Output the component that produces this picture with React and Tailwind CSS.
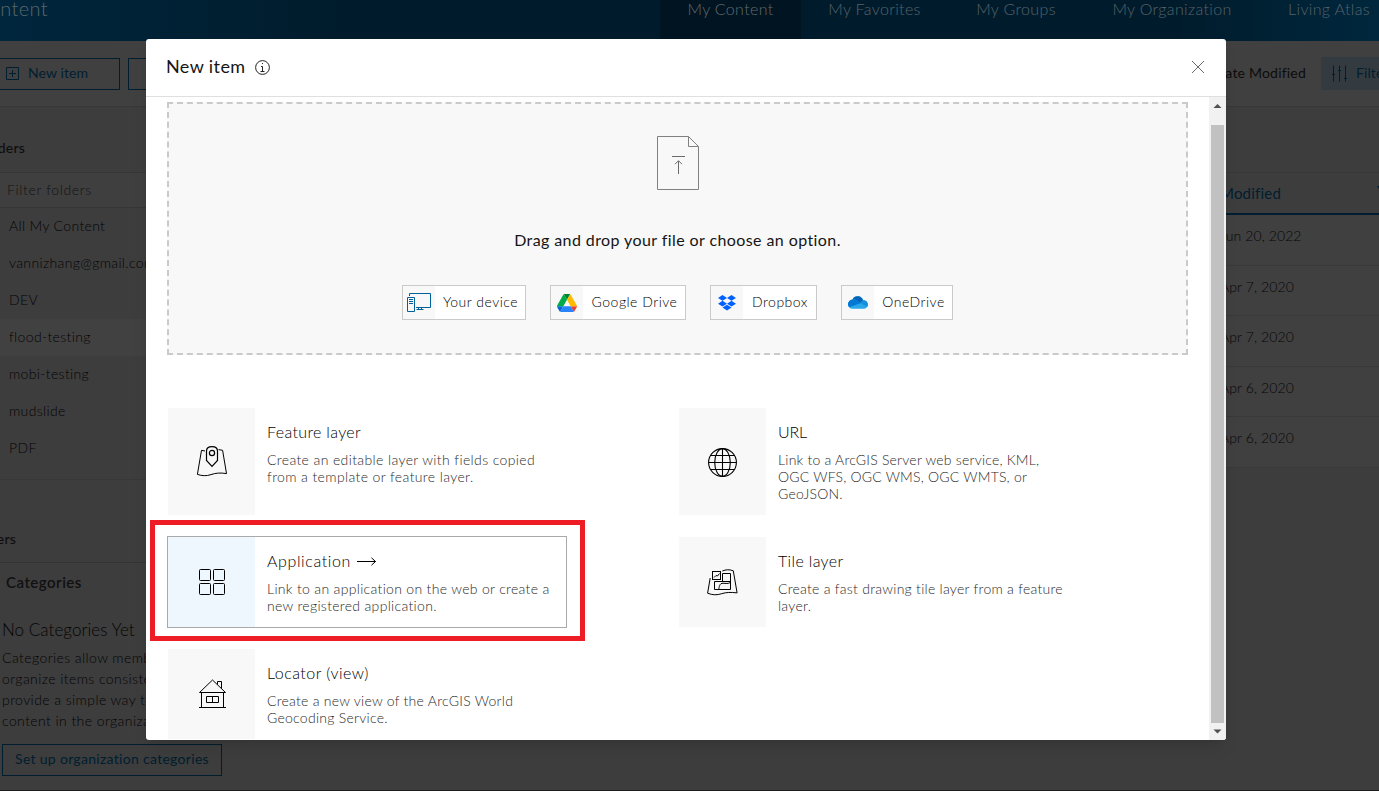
import React from "react";

const svgBase = { fill: "none", stroke: "currentColor", strokeWidth: 1 };

function PinMapIcon() {
  return (
    <svg width="31" height="31" viewBox="0 0 31 31" {...svgBase} className="text-black">
      <path d="M9 5 5.500 4.300 1.400 28.400c4.600 1.500 9 1.800 13.600.200 5-1.700 9.500-2 15.500-1L26.600 4.300 22.500 3.600" />
      <path strokeWidth="1.200" d="M10.500 5c0-3 2-4.400 5.500-4.400s5.500 1.400 5.500 4.400v9.500L16 20.300l-5.500-5.800z" />
      <circle cx="16" cy="7" r="2.600" strokeWidth="1.200" />
    </svg>
  );
}

function GlobeIcon() {
  return (
    <svg width="31" height="31" viewBox="0 0 31 31" fill="none" stroke="#000" strokeWidth="1.100">
      <circle cx="15.500" cy="16.500" r="13.900" />
      <ellipse cx="15.500" cy="16.500" rx="7.800" ry="13.900" />
      <path d="M15.500 2.500v28M1.500 16.500h28M3.500 9.500h24M3.500 23.500h24" />
    </svg>
  );
}

function AppsIcon() {
  return (
    <svg width="31" height="32" viewBox="0 0 31 32" {...svgBase} className="text-black">
      <rect x="3.500" y="3.500" width="11" height="11" rx="1" />
      <rect x="17.500" y="3.500" width="11" height="11" rx="1" />
      <rect x="3.500" y="17.500" width="11" height="11" rx="1" />
      <rect x="17.500" y="17.500" width="11" height="11" rx="1" />
    </svg>
  );
}

function TileMapIcon() {
  return (
    <svg width="31" height="32" viewBox="0 0 31 32" {...svgBase} className="text-black">
      <path d="M3.200 12 .600 27.200c5 2 9.500 2 14 .5 5-1.500 9-1.600 15.500-.8L26.300 4.800c-4-1.500-7.300-1.300-11 .2" />
      <rect x="5.500" y="5.500" width="8" height="8" />
      <path d="M15.500 15.500v-8h8v16h-16v-8h16M11.500 23.500c.8-.5.300-5.500 3.500-6.200 2.500-.3 5.500 1 8.500-.8M7 11.500l2-2 1.500.500 2-2.500" />
    </svg>
  );
}

function HouseIcon() {
  return (
    <svg width="31" height="32" viewBox="0 0 31 32" {...svgBase} className="text-black">
      <path d="M3.500 14.500 16.500 2 29.500 14.500zM5.500 14.500v15M27.500 14.500v15M3 29.500h27M10.500 18.500h12v6h-12zM16.500 18.500v6M21.500 6.500v-3h4v7" />
    </svg>
  );
}

function DeviceIcon() {
  return (
    <svg width="24" height="21" viewBox="0 0 24 21" fill="none" stroke="#00619b" className="shrink-0">
      <path d="M2.500 4V1.500h21v14H9M.5 5.500h7v14h-7zM2 7.500h4M2 9.500h4M2 11.500h4M11.500 15.500v2M14.500 15.500v2M9.500 17.500h7" />
    </svg>
  );
}

function DriveIcon() {
  return (
    <svg width="20" height="18" viewBox="0 0 87.3 78" className="shrink-0">
      <path fill="#0066da" d="m6.600 66.850 3.850 6.650c.8 1.400 1.950 2.500 3.300 3.300l13.750-23.800H0c0 1.550.4 3.100 1.200 4.500z" />
      <path fill="#00ac47" d="M43.650 25 29.900 1.200c-1.350.8-2.500 1.900-3.300 3.300L1.200 48.500A9 9 0 0 0 0 53h27.500z" />
      <path fill="#ea4335" d="M73.550 76.800c1.350-.8 2.500-1.900 3.300-3.300l1.600-2.750L86.100 57.500c.8-1.400 1.200-2.950 1.200-4.500H59.800l5.850 11.500z" />
      <path fill="#00832d" d="M43.650 25 57.400 1.200C56.050.4 54.500 0 52.900 0H34.400c-1.600 0-3.150.45-4.500 1.200z" />
      <path fill="#2684fc" d="M59.800 53H27.500L13.750 76.800c1.350.8 2.900 1.200 4.500 1.200h50.800c1.600 0 3.150-.45 4.500-1.200z" />
      <path fill="#ffba00" d="M73.400 26.500 60.700 4.500c-.8-1.400-1.950-2.500-3.300-3.300L43.650 25 59.800 53h27.450c0-1.550-.4-3.100-1.200-4.500z" />
    </svg>
  );
}

function DropboxIcon() {
  return (
    <svg width="18" height="16" viewBox="0 0 18 16" fill="#0061ff" className="shrink-0">
      <path d="M4.500 0 9 2.900 4.500 5.800 0 2.900zM13.500 0 18 2.900l-4.500 2.900L9 2.900zM4.500 5.800 9 8.700l-4.500 2.900L0 8.700zM13.500 5.800 18 8.700l-4.500 2.900L9 8.700zM9 9.700l4.500 2.900L9 15.500l-4.500-2.900z" />
    </svg>
  );
}

function OneDriveIcon() {
  return (
    <svg width="20" height="13" viewBox="0 0 20 13" className="shrink-0">
      <path fill="#28a8ea" d="M4.500 3.400A5.700 5.700 0 0 1 15 4.300c2.900-.1 4.900 1.900 4.900 4.300 0 2.500-1.900 4.200-4.300 4.200H4.700C2 12.800.1 10.800.1 8.200c0-2.700 1.900-4.700 4.400-4.800z" />
      <path fill="#1490df" d="M11 6.500 15 4.300c2.900-.1 4.900 1.900 4.900 4.300 0 .8-.2 1.500-.6 2.200z" />
      <path fill="#0078d4" d="M4.500 3.400c1.600-.2 2.900.1 4 .8l4.500 2.800L1.100 11.200A4.800 4.800 0 0 1 4.500 3.400z" />
      <path fill="#0364b8" d="M4.500 3.400A5.700 5.700 0 0 1 15 4.300L12 6.400 8.500 4.200c-1.200-.7-2.500-1-4-.8z" />
    </svg>
  );
}

const sources = [
  { label: "Your device", Icon: DeviceIcon, box: "w-[124px]" },
  { label: "Google Drive", Icon: DriveIcon, box: "w-[136px]" },
  { label: "Dropbox", Icon: DropboxIcon, box: "w-[107px]" },
  { label: "OneDrive", Icon: OneDriveIcon, box: "w-[112px]" },
];

const items = [
  { title: "Feature layer", lines: ["Create an editable layer with fields copied", "from a template or feature layer."], Icon: PinMapIcon, box: "h-[109px]", titleTrack: "tracking-[0.35px]", textTrack: "tracking-[0.38px]" },
  { title: "URL", lines: ["Link to a ArcGIS Server web service, KML,", "OGC WFS, OGC WMS, OGC WMTS, or", "GeoJSON."], Icon: GlobeIcon, box: "h-[109px]", titleTrack: "tracking-[-0.2px]", textTrack: "tracking-[0.22px]" },
  { title: "Application", lines: ["Link to an application on the web or create a", "new registered application."], Icon: AppsIcon, box: "h-[92px]", active: true, titleTrack: "tracking-[0.62px]", textTrack: "tracking-[0.32px]" },
  { title: "Tile layer", lines: ["Create a fast drawing tile layer from a feature", "layer."], Icon: TileMapIcon, box: "h-[92px]", titleTrack: "tracking-[0.35px]", textTrack: "tracking-[0.27px]" },
  { title: "Locator (view)", lines: ["Create a new view of the ArcGIS World", "Geocoding Service."], Icon: HouseIcon, box: "h-[92px]", titleTrack: "tracking-[0.48px]", textTrack: "tracking-[0.27px]" },
];

function ItemCard({ title, lines, Icon, box, active, titleTrack, textTrack }) {
  return (
    <div className={`flex w-[400px] border ${box} ${active ? "border-[#a9a9a9]" : "border-transparent"}`}>
      <div className={`flex w-[87px] shrink-0 items-center justify-center ${active ? "bg-[#eef6fe]" : "bg-[#f8f8f8]"}`}>
        <Icon />
      </div>
      <div className="pt-[14px] pl-3 whitespace-nowrap">
        <h3 className={`flex h-5 items-center gap-[6px] text-[16px] font-light text-black ${titleTrack}`}>
          {title}
          {active && (
            <svg width="20" height="9" viewBox="0 0 20 9" {...svgBase}>
              <path d="M0 4.500h18.500M14.500.8l4 3.700-4 3.700" />
            </svg>
          )}
        </h3>
        <p className={`mt-[9px] text-[14px] leading-[17px] font-light text-[#2a2a2a] ${textTrack}`}>
          {lines.map((l) => (
            <span key={l} className="block">{l}</span>
          ))}
        </p>
      </div>
    </div>
  );
}

const nav = [
  { label: "My Content", box: "w-[141px]", active: true },
  { label: "My Favorites", box: "w-[147px]" },
  { label: "My Groups", box: "w-[136px]" },
  { label: "My Organization", box: "w-[176px]" },
  { label: "Living Atlas", box: "w-[138px]" },
];
const folders = ["All My Content", "vannizhang@gmail.com", "DEV", "flood-testing", "mobi-testing", "mudslide", "PDF"];
const dates = ["Jun 20, 2022", "Apr 7, 2020", "Apr 7, 2020", "Apr 6, 2020", "Apr 6, 2020"];

function Backdrop() {
  return (
    <div className="flex h-full flex-col whitespace-nowrap">
      <header className="flex h-[41px] shrink-0 bg-linear-to-r from-[#00263d] via-[#001c2c] via-25% to-[#001c2c] to-80%">
        <div className="flex w-12 shrink-0 justify-end text-[20px] leading-[17px] font-light tracking-[0.4px] text-[#5a656b]">My Content</div>
        <nav className="ml-[612px] flex bg-linear-to-r from-transparent from-70% to-[#00283f]">
          {nav.map((n) => (
            <div key={n.label} className={`flex shrink-0 justify-center text-[16px] leading-[17px] font-light tracking-[0.35px] ${n.box} ${n.active ? "bg-[#001422] text-[#626a6e]" : "text-[#57626a]"}`}>
              {n.label}
            </div>
          ))}
        </nav>
      </header>
      <div className="flex h-[66px] shrink-0 items-center border-b border-[#373737] bg-[#404040]">
        <div className="flex h-8 w-[120px] items-center border border-l-0 border-[#001e30] pl-1.5 text-[14px] text-[#001e30]">
          <svg width="13" height="13" viewBox="0 0 13 13" {...svgBase}>
            <path d="M.5.5h12v12H.5zM6.500 3v7M3 6.500h7" />
          </svg>
          <span className="ml-[9px] pb-[2px] tracking-[0.1px]">New item</span>
        </div>
        <div className="ml-2 h-8 w-24 border border-[#001e30]" />
        <div className="ml-auto w-24 pb-[2px] text-right text-[14px] tracking-[0.2px] text-[#0c0c0c]">Date Modified</div>
        <div className="ml-[15px] flex h-[33px] w-[58px] items-center overflow-hidden bg-[#343b40] pl-[11px] text-[14px] text-[#001e30]">
          <svg width="15" height="17" viewBox="0 0 15 17" {...svgBase} className="shrink-0">
            <path d="M1.500.5v16M7.500.5v16M13.500.5v16M0 9.500h3M6 5.500h3M12 13.500h3" />
          </svg>
          <span className="ml-[9px] pb-[2px] tracking-[0.1px]">Filter</span>
        </div>
      </div>
      <div className="flex min-h-0 flex-1 justify-between border-b border-[#1c1c1c] bg-[#3d3d3d]">
        <aside className="w-[300px] text-[14px] font-light tracking-[0.35px] text-[#040404]">
          <div className="flex h-[65px] items-center pt-[15px] font-medium tracking-[0.2px] text-[#0e0e0e]">
            <span className="flex w-[25px] justify-end">Folders</span>
          </div>
          <div className="flex h-[36px] items-center border-y border-[#363636] bg-[#3f3f3f] pb-[2px] pl-[7px] tracking-[0.65px] text-[#121212]">Filter folders</div>
          <ul className="border-b border-[#383838] pb-3">
            {folders.map((f, i) => (
              <li key={f} className={`flex h-[37px] items-center pb-[2px] pl-[9px] ${i === 3 ? "bg-[#414141]" : ""}`}>{f}</li>
            ))}
          </ul>
          <div className="flex h-[83px] items-center border-b border-[#333] pt-[35px] font-medium tracking-[0.2px] text-[#0e0e0e]">
            <span className="flex w-4 justify-end">Filters</span>
          </div>
          <h4 className="pt-[8px] pl-1.5 text-[15px] leading-[22px] font-semibold tracking-[0.5px] text-[#101010]">Categories</h4>
          <div className="pl-0.5">
            <h5 className="pt-[25px] text-[17px] leading-6 tracking-[0.05px]">No Categories Yet</h5>
            <p className="pt-[5px] text-[14px] leading-[21px] tracking-[0.42px]">
              Categories allow members to
              <br />
              organize items consistently and
              <br />
              provide a simple way to find
              <br />
              content in the organization.
            </p>
            <div className="mt-[13px] flex h-8 w-[220px] items-center justify-center border border-[#001e30] pb-[3px] font-normal tracking-[0.3px] text-[#001e30]">Set up organization categories</div>
          </div>
        </aside>
        <section className="w-[180px] pt-[65px] text-[14px] tracking-[0.2px]">
          <div className="flex h-[43px] items-center border-t border-b-2 border-t-[#383838] border-b-[#001e30] bg-[#3d3d3d] pl-[21px] text-[15px] text-[#001e30]">
            Modified
            <svg width="8" height="6" viewBox="0 0 8 6" fill="currentColor" className="mb-2 ml-[96px] shrink-0">
              <path d="M0 0h8L4 6z" />
            </svg>
          </div>
          {dates.map((d, i) => (
            <div key={i} className="h-[50.500px] border-b border-[#393939] bg-[#404040] pt-[10px] pl-[21px] font-light tracking-[0.1px] text-[#060606]">{d}</div>
          ))}
        </section>
      </div>
    </div>
  );
}

function Modal() {
  return (
    <div className="absolute top-[39px] left-[146px] flex h-[701px] w-[1080px] flex-col overflow-hidden rounded-[3px] bg-white shadow-lg">
      <div className="flex h-[58px] shrink-0 items-center border-b border-[#dfdfdf] px-5">
        <h2 className="pb-[2px] text-[18px] tracking-[0.4px] text-[#151515]">New item</h2>
        <svg width="15" height="15" viewBox="0 0 15 15" {...svgBase} className="ml-[9px] text-[#222]">
          <circle cx="7.500" cy="7.500" r="6.900" />
          <path d="M6 6.500h1.500v5M5.500 11.500h4M7 3.500h1" />
        </svg>
        <svg width="14" height="14" viewBox="0 0 14 14" {...svgBase} className="mr-px mb-[2px] ml-auto text-[#6a6a6a]">
          <path d="m1 1 12 12M13 1 1 13" />
        </svg>
      </div>
      <div className="flex min-h-0 flex-1">
        <div className="flex-1 overflow-hidden pt-[5px] pl-[21px]">
          <div className="flex h-[253px] w-[1021px] flex-col items-center border-2 border-dashed border-[#cacaca] bg-[#f8f8f8] pt-8">
            <svg width="42" height="54" viewBox="0 0 42 54" {...svgBase} className="text-[#808080]">
              <path d="M31.500.5H.5v53h41v-43zM31.500.5v10h10" />
              <path d="M15 20.500h13M21.500 38V25M18 28.200l3.500-3.500 3.500 3.500" stroke="#6a6a6a" />
            </svg>
            <p className="mt-[38px] text-[16px] leading-6 tracking-[0.41px] text-[#151515]">Drag and drop your file or choose an option.</p>
            <div className="mt-[33px] flex gap-6">
              {sources.map(({ label, Icon, box }) => (
                <div key={label} className={`flex h-[35px] border border-[#cacaca] bg-white text-[14px] text-black ${box}`}>
                  <span className="flex w-8 shrink-0 items-center justify-center bg-[#f8f8f8]"><Icon /></span>
                  <span className="flex flex-1 items-center justify-center pb-[2px] pl-px font-light tracking-[0.5px] whitespace-nowrap">{label}</span>
                </div>
              ))}
            </div>
          </div>
          <div className="mt-[52px] grid grid-cols-[511px_400px] gap-y-5">
            {items.map((it) => (
              <ItemCard key={it.title} {...it} />
            ))}
          </div>
        </div>
        <div className="flex w-[17px] flex-col items-center bg-[#f1f1f1]">
          <svg width="17" height="17" viewBox="0 0 17 17" fill="#505050" className="shrink-0"><path d="M4.500 11 8.500 7l4 4z" /></svg>
          <div className="mt-[11px] h-[598px] w-[13px] bg-[#c1c1c1]" />
          <svg width="17" height="17" viewBox="0 0 17 17" fill="#505050" className="shrink-0"><path d="M4.500 6.500h8l-4 4z" /></svg>
        </div>
      </div>
    </div>
  );
}

export default function App() {
  return (
    <div className="relative h-[791px] w-[1379px] overflow-hidden bg-[#3d3d3d] font-['Lato',sans-serif]">
      <Backdrop />
      <Modal />
      <div className="absolute top-[520px] left-[150px] h-[121px] w-[435px] border-[5px] border-[#ee1c24]" />
    </div>
  );
}
